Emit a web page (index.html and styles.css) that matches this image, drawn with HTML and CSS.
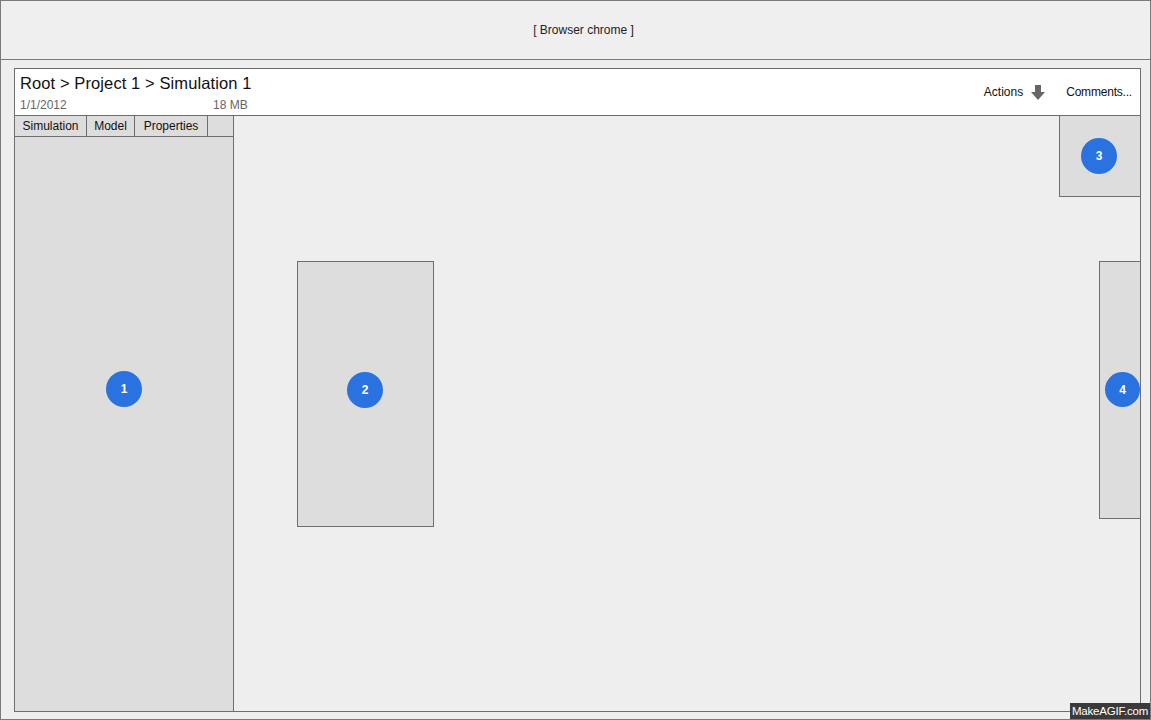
FILE: index.html
```html
<!DOCTYPE html>
<html>
<head>
<meta charset="utf-8">
<link rel="stylesheet" href="styles.css">
</head>
<body>
<div class="frame">
  <div class="chrome">[ Browser chrome ]</div>
  <div class="content">
    <div class="window">
      <div class="header">
        <div class="titles">
          <div class="crumbs">Root &gt; Project 1 &gt; Simulation 1</div>
          <div class="meta"><span>1/1/2012</span><span>18 MB</span></div>
        </div>
        <div class="actions">
          <span class="act">Actions
            <svg class="arrow" width="14" height="15" viewBox="0 0 14 15"><path d="M4 0h6v7h4L7 15 0 7h4z" fill="#666"/></svg>
          </span>
          <span class="act comments">Comments...</span>
        </div>
      </div>
      <div class="body">
        <div class="left">
          <div class="tabs">
            <div class="tab t1">Simulation</div>
            <div class="tab t2">Model</div>
            <div class="tab t3">Properties</div>
            <div class="tab t4"></div>
          </div>
          <div class="leftfill"></div>
          <div class="badge b1">1</div>
        </div>
        <div class="canvas">
          <div class="panel p2"><div class="badge b2">2</div></div>
          <div class="panel p3"><div class="badge b3">3</div></div>
          <div class="panel p4"><div class="badge b4">4</div></div>
        </div>
      </div>
    </div>
  </div>
  <div class="watermark">MakeAGIF.com</div>
</div>
</body>
</html>
```
FILE: styles.css
```css
* { box-sizing: border-box; }
html, body { margin: 0; padding: 0; }
body {
  font-family: "Liberation Sans", Arial, sans-serif;
  color: #222;
  background: #eee;
}
.frame {
  position: relative;
  width: 1151px;
  height: 720px;
  border: 1px solid #7a7a7a;
  background: #eeeeee;
  display: flex;
  flex-direction: column;
  overflow: hidden;
}
.chrome {
  height: 59px;
  border-bottom: 1px solid #7a7a7a;
  background: #efefef;
  display: flex;
  align-items: center;
  justify-content: center;
  font-size: 12px;
  color: #222;
  padding-left: 16px;
  padding-bottom: 1px;
}
.content {
  flex: 1;
  padding: 8px 9px 7px 13px;
}
.window {
  height: 100%;
  border: 1px solid #6e6e6e;
  display: flex;
  flex-direction: column;
  background: #eee;
}
.header {
  height: 47px;
  background: #fff;
  border-bottom: 1px solid #6e6e6e;
  display: flex;
  justify-content: space-between;
  padding: 0 8px 0 5px;
}
.titles { padding-top: 5px; }
.crumbs {
  font-size: 16.5px;
  color: #111;
  letter-spacing: 0.1px;
}
.meta {
  display: flex;
  font-size: 12px;
  color: #666;
  margin-top: 5px;
}
.meta span:first-child { width: 193px; }
.actions {
  display: flex;
  align-items: center;
  gap: 21px;
  font-size: 12px;
  color: #111;
}
.act { display: flex; align-items: center; gap: 8px; }
.comments { letter-spacing: -0.2px; }
.arrow { display: block; }
.body {
  flex: 1;
  display: flex;
  min-height: 0;
}
.left {
  position: relative;
  width: 219px;
  border-right: 1px solid #6e6e6e;
  background: #dddddd;
  display: flex;
  flex-direction: column;
}
.tabs {
  display: flex;
  height: 21px;
  border-bottom: 1px solid #6e6e6e;
}
.tab {
  border-right: 1px solid #6e6e6e;
  font-size: 12px;
  color: #111;
  display: flex;
  align-items: center;
  justify-content: center;
}
.t1 { width: 72px; }
.t2 { width: 48px; }
.t3 { width: 73px; }
.t4 { flex: 1; border-right: none; }
.leftfill { flex: 1; }
.canvas {
  position: relative;
  flex: 1;
  background: #eeeeee;
}
.panel {
  position: absolute;
  background: #dddddd;
  border: 1px solid #6e6e6e;
}
.p2 { left: 63px; top: 145px; width: 137px; height: 266px; }
.p3 { right: 0; top: 0; width: 81px; height: 81px; border-top: none; border-right: none; }
.p4 { right: 0; top: 145px; width: 41px; height: 258px; border-right: none; }
.badge {
  position: absolute;
  width: 36px;
  height: 36px;
  border-radius: 50%;
  background: #2a72e0;
  color: #fff;
  font-size: 12px;
  font-weight: bold;
  display: flex;
  align-items: center;
  justify-content: center;
}
.b1 { left: 91px; top: 255px; }
.b2 { left: 49px; top: 110px; }
.b3 { left: 21px; top: 22px; }
.b4 { left: 5px; top: 110px; width: 35px; height: 35px; }
.watermark {
  position: absolute;
  right: 0;
  bottom: 0;
  width: 80px;
  height: 16px;
  background: #3a3a3a;
  color: #fff;
  font-size: 11.5px;
  letter-spacing: -0.2px;
  display: flex;
  align-items: center;
  justify-content: center;
}
```
